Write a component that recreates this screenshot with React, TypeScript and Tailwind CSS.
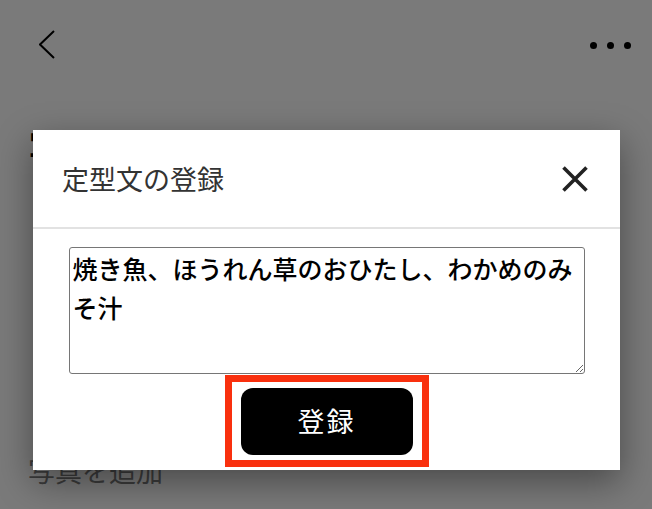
import React from 'react';

const jp = "font-['Noto_Sans_CJK_JP','Noto_Sans',sans-serif]";

function BackIcon() {
  return (
    <svg width="16" height="30" viewBox="0 0 16 30" fill="none">
      <polyline points="15,1 1,14.5 15,28" stroke="#000" strokeWidth="2" />
    </svg>
  );
}

function CloseIcon() {
  return (
    <svg width="26" height="26" viewBox="0 0 26 26">
      <path d="M1.5 1.5 24.5 24.5 M24.5 1.5 1.5 24.5" stroke="#222" strokeWidth="3.6" />
    </svg>
  );
}

export default function App() {
  return (
    <div className={`relative h-[509px] w-[652px] overflow-hidden bg-white ${jp}`}>
      {/* page behind the dialog */}
      <div className="flex items-center justify-between pl-[39px] pr-[21px] pt-[30px]">
        <BackIcon />
        <div className="flex gap-[10px]">
          <span className="h-[7px] w-[7px] rounded-full bg-black" />
          <span className="h-[7px] w-[7px] rounded-full bg-black" />
          <span className="h-[7px] w-[7px] rounded-full bg-black" />
        </div>
      </div>
      <h1 className="mt-[67px] pl-[29px] text-[34px] font-bold leading-[40px] text-black">写真を記録</h1>
      <p className="mt-[287px] pl-[28px] text-[27px] leading-[34px] text-[#7e7e7e]">写真を追加</p>

      {/* overlay + dialog */}
      <div className="absolute inset-0 bg-black/[0.52] pl-[33px] pt-[130px]">
        <div className="w-[587px] bg-white shadow-[0_12px_34px_rgba(0,0,0,0.4)]">
          <div className="flex h-[99px] items-center justify-between border-b-2 border-[#e2e2e2] pl-[29px] pr-[32px]">
            <span className="text-[27px] leading-[34px] text-[#333]">定型文の登録</span>
            <CloseIcon />
          </div>
          <div className="flex flex-col items-center pt-[18px] pb-[3px]">
            <textarea
              defaultValue="焼き魚、ほうれん草のおひたし、わかめのみそ汁"
              className={`block h-[127px] w-[516px] rounded-[3px] border border-[#767676] px-[3px] py-[1px] text-[25px] font-medium leading-[39px] text-black outline-none ${jp}`}
            />
            <div className="mt-[1px] flex h-[92px] w-[204px] items-center justify-center border-[7px] border-[#f9300e]">
              <button className="h-[67px] w-[172px] rounded-[12px] bg-black text-[27px] tracking-[2px] text-white">
                登録
              </button>
            </div>
          </div>
        </div>
      </div>
    </div>
  );
}
